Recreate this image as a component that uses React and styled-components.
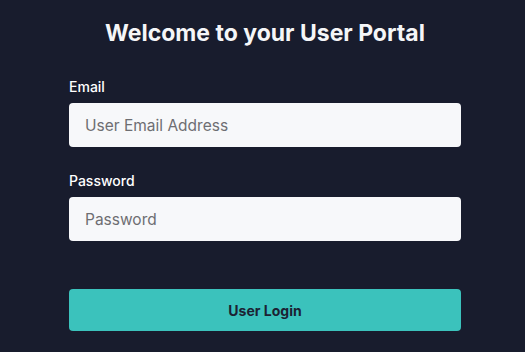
import React from "react";
import styled, { createGlobalStyle } from "styled-components";

const Global = createGlobalStyle`
  html, body { margin: 0; padding: 0; background: #181c2d; }
  body { font-family: Inter, "Noto Sans", sans-serif; }
  * { box-sizing: border-box; }
`;

const Page = styled.div`
  min-height: 352px;
  background: #181c2d;
  display: flex;
  flex-direction: column;
  padding: 17px 64px 0 69px;
`;

const Title = styled.h1`
  margin: 0 0 29px;
  font-size: 23px;
  font-weight: 700;
  color: #f5f6f8;
  text-align: center;
  line-height: 32px;
  width: 392px;
`;

const Form = styled.form`
  display: flex;
  flex-direction: column;
  width: 392px;
`;

const Field = styled.div`
  display: flex;
  flex-direction: column;
  margin-bottom: 25px;
`;

const Label = styled.label`
  font-size: 14px;
  font-weight: 500;
  color: #ffffff;
  line-height: 18px;
  margin-bottom: 7px;
`;

const Input = styled.input`
  height: 44px;
  border: none;
  border-radius: 4px;
  background: #f7f8fa;
  padding: 0 16px;
  font-family: Inter, "Noto Sans", sans-serif;
  font-size: 15.5px;
  color: #222;
  outline: none;
  &::placeholder { color: #6e6e72; }
`;

const Button = styled.button`
  margin-top: 23px;
  height: 42px;
  border: none;
  border-radius: 4px;
  background: #3bc2bc;
  color: #1c2233;
  font-family: Inter, "Noto Sans", sans-serif;
  font-size: 14px;
  font-weight: 700;
  cursor: pointer;
`;

export default function App() {
  return (
    <>
      <Global />
      <Page>
        <Title>Welcome to your User Portal</Title>
        <Form onSubmit={(e) => e.preventDefault()}>
          <Field>
            <Label>Email</Label>
            <Input type="email" placeholder="User Email Address" />
          </Field>
          <Field>
            <Label>Password</Label>
            <Input type="password" placeholder="Password" />
          </Field>
          <Button type="submit">User Login</Button>
        </Form>
      </Page>
    </>
  );
}
